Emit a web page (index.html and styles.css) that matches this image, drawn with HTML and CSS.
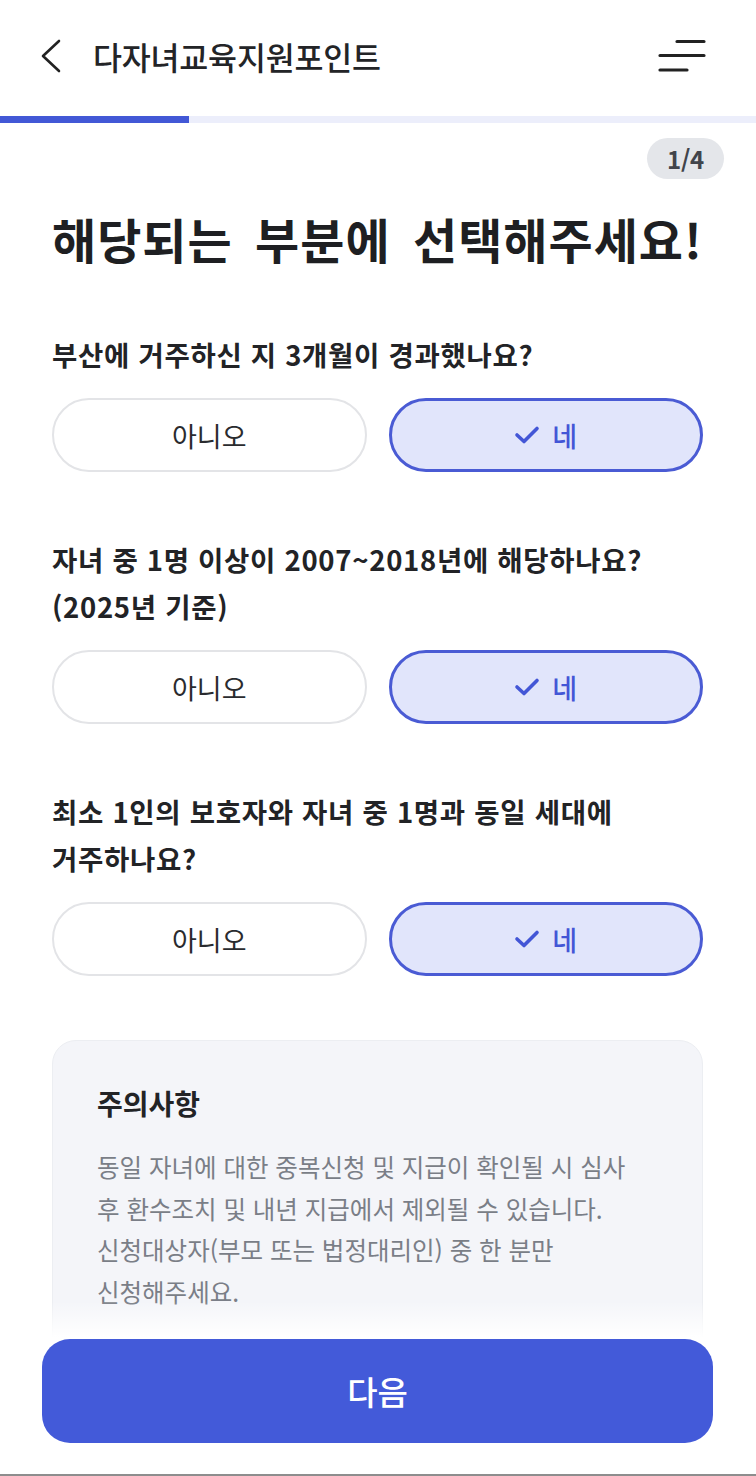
FILE: index.html
```html
<!DOCTYPE html>
<html lang="ko">
<head>
<meta charset="utf-8">
<title>다자녀교육지원포인트</title>
<link rel="stylesheet" href="styles.css">
</head>
<body>
<div class="page">
  <header class="header">
    <div class="header-left">
      <svg class="back" width="24" height="36" viewBox="0 0 24 36"><path d="M19 2 L3 17 L19 32" fill="none" stroke="#222" stroke-width="2.6" stroke-linecap="round" stroke-linejoin="round"/></svg>
      <h1 class="title">다자녀교육지원포인트</h1>
    </div>
    <svg class="menu" width="48" height="36" viewBox="0 0 48 36"><path d="M19 3.5 H46 M2 17.5 H46 M2 32 H29" fill="none" stroke="#222" stroke-width="3.2" stroke-linecap="round"/></svg>
  </header>
  <div class="progress"><div class="progress-fill" style="width:25%"></div></div>
  <div class="step-row"><span class="badge">1/4</span></div>
  <main class="content">
    <h2 class="heading">해당되는 부분에 선택해주세요!</h2>

    <section class="question">
      <p class="q-text">부산에 거주하신 지 3개월이 경과했나요?</p>
      <div class="options">
        <button class="opt">아니오</button>
        <button class="opt selected"><svg class="check" width="26" height="20" viewBox="0 0 26 20"><path d="M3 10 L10 16.5 L23 3.5" fill="none" stroke="#4356d6" stroke-width="3.6" stroke-linecap="round" stroke-linejoin="round"/></svg>네</button>
      </div>
    </section>

    <section class="question">
      <p class="q-text">자녀 중 1명 이상이 2007~2018년에 해당하나요?<br>(2025년 기준)</p>
      <div class="options">
        <button class="opt">아니오</button>
        <button class="opt selected"><svg class="check" width="26" height="20" viewBox="0 0 26 20"><path d="M3 10 L10 16.5 L23 3.5" fill="none" stroke="#4356d6" stroke-width="3.6" stroke-linecap="round" stroke-linejoin="round"/></svg>네</button>
      </div>
    </section>

    <section class="question">
      <p class="q-text">최소 1인의 보호자와 자녀 중 1명과 동일 세대에<br>거주하나요?</p>
      <div class="options">
        <button class="opt">아니오</button>
        <button class="opt selected"><svg class="check" width="26" height="20" viewBox="0 0 26 20"><path d="M3 10 L10 16.5 L23 3.5" fill="none" stroke="#4356d6" stroke-width="3.6" stroke-linecap="round" stroke-linejoin="round"/></svg>네</button>
      </div>
    </section>

    <section class="notice">
      <h3 class="notice-title">주의사항</h3>
      <p class="notice-body">동일 자녀에 대한 중복신청 및 지급이 확인될 시 심사<br>후 환수조치 및 내년 지급에서 제외될 수 있습니다.<br>신청대상자(부모 또는 법정대리인) 중 한 분만<br>신청해주세요.</p>
    </section>
  </main>
  <footer class="bottom">
    <button class="next">다음</button>
  </footer>
</div>
</body>
</html>
```

FILE: styles.css
```css
* { box-sizing: border-box; }
html, body { margin: 0; padding: 0; background: #fff; }
body {
  font-family: "Noto Sans CJK KR", "Noto Sans", sans-serif;
  color: #222326;
}
.page {
  width: 756px;
  height: 1476px;
  overflow: hidden;
  position: relative;
  border-bottom: 2px solid #8d8d8d;
}
.header {
  height: 116px;
  display: flex;
  align-items: center;
  justify-content: space-between;
  padding: 0 50px 4px 40px;
}
.header-left { display: flex; align-items: center; gap: 29px; }
.back { display: block; margin-top: 1px; }
.title {
  margin: 0;
  font-size: 31.5px;
  font-weight: 500;
  letter-spacing: -0.2px;
  color: #232427;
}
.menu { display: block; }
.progress { height: 7px; background: #eceefb; }
.progress-fill { height: 100%; background: #4258d6; }
.step-row {
  display: flex;
  justify-content: flex-end;
  padding: 15px 32px 0 0;
}
.badge {
  display: inline-flex;
  align-items: center;
  justify-content: center;
  width: 77px;
  height: 41px;
  border-radius: 21px;
  background: #e4e6ea;
  color: #41444b;
  font-size: 24px;
  font-weight: 700;
  letter-spacing: -0.3px;
}
.content { padding: 0 53px 0 52px; }
.heading {
  margin: 30px 0 0;
  font-size: 48px;
  line-height: 58px;
  font-weight: 700;
  letter-spacing: 1px;
  word-spacing: 8px;
  color: #1e1f22;
  white-space: nowrap;
}
.question { margin-top: 64px; }
.q-text {
  margin: 0;
  font-size: 27.5px;
  line-height: 47px;
  font-weight: 700;
  letter-spacing: 0.7px;
  color: #222326;
  white-space: nowrap;
}
.options {
  display: grid;
  grid-template-columns: 1fr 1fr;
  gap: 22px;
  margin-top: 20px;
}
.opt {
  height: 74px;
  border-radius: 37px;
  border: 2px solid #e3e4e7;
  background: #fff;
  font-family: inherit;
  font-size: 27px;
  font-weight: 400;
  color: #2a2b2e;
  display: flex;
  align-items: center;
  justify-content: center;
  gap: 12px;
  padding: 0;
}
.opt.selected {
  border: 3.5px solid #4a5bd4;
  background: #e1e5fb;
  color: #4356d6;
  font-weight: 500;
}
.check { display: block; }
.notice {
  margin-top: 64px;
  background: #f4f5f9;
  border: 1px solid #eceef2;
  border-radius: 24px;
  padding: 42px 30px 60px 44px;
}
.notice-title {
  margin: 0;
  font-size: 28px;
  line-height: 40px;
  font-weight: 700;
  color: #222326;
}
.notice-body {
  margin: 23px 0 0;
  font-size: 24.5px;
  line-height: 41.7px;
  color: #7a7e87;
  letter-spacing: 0;
  white-space: nowrap;
}
.bottom {
  position: absolute;
  left: 0;
  right: 0;
  bottom: 0;
  padding: 38px 43px 31px 42px;
  background: linear-gradient(to bottom, rgba(255,255,255,0) 0px, #fff 36px);
}
.next {
  display: block;
  width: 100%;
  height: 104px;
  border: none;
  border-radius: 28px;
  background: #435ad9;
  color: #fff;
  font-family: inherit;
  font-size: 33px;
  font-weight: 500;
}
```
